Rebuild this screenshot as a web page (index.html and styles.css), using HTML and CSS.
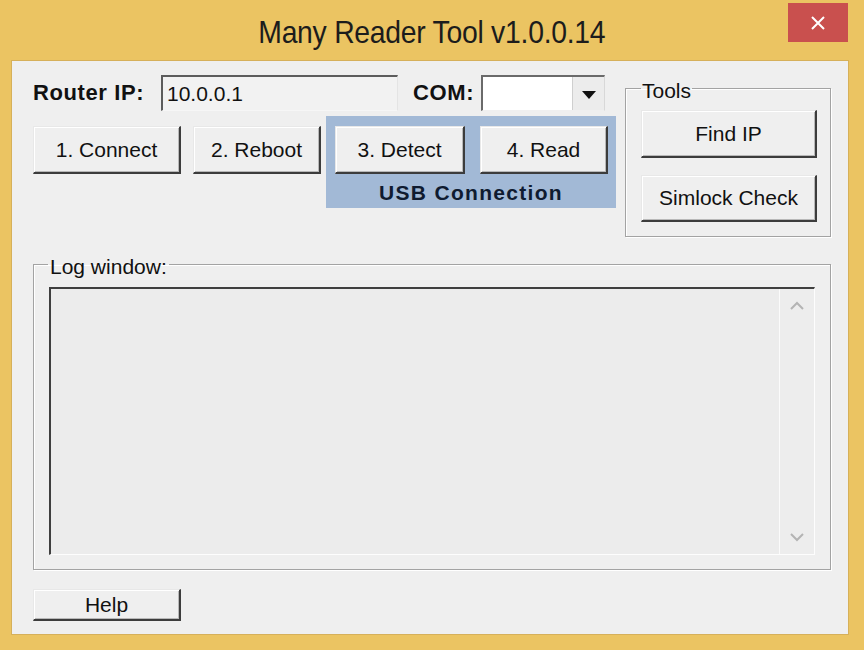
FILE: index.html
```html
<!DOCTYPE html>
<html>
<head>
<meta charset="utf-8">
<title>Many Reader Tool</title>
<link rel="stylesheet" href="styles.css">
</head>
<body>
<div class="window">
  <div class="titlebar">
    <div class="tb-spacer"></div>
    <div class="title">Many Reader Tool v1.0.0.14</div>
    <div class="tb-right">
      <div class="close">
        <svg width="14" height="14" viewBox="0 0 14 14"><path d="M1 1L13 13M13 1L1 13" stroke="#fff" stroke-width="2"/></svg>
      </div>
    </div>
  </div>
  <div class="client">
    <div class="top">
      <div class="left">
        <div class="row1">
          <span class="lbl lbl-ip">Router IP:</span>
          <div class="textbox">10.0.0.1</div>
          <span class="lbl lbl-com">COM:</span>
          <div class="combo">
            <div class="combo-field"></div>
            <div class="combo-btn">
              <svg width="14" height="8" viewBox="0 0 14 8"><path d="M0 0H14L7 8Z" fill="#111"/></svg>
            </div>
          </div>
        </div>
        <div class="row2">
          <button class="btn btn-connect">1. Connect</button>
          <button class="btn btn-reboot">2. Reboot</button>
          <div class="usb">
            <div class="usb-btns">
              <button class="btn btn-detect">3. Detect</button>
              <button class="btn btn-read">4. Read</button>
            </div>
            <div class="usb-label">USB Connection</div>
          </div>
        </div>
      </div>
      <fieldset class="group tools">
        <legend>Tools</legend>
        <button class="btn btn-tool">Find IP</button>
        <button class="btn btn-tool">Simlock Check</button>
      </fieldset>
    </div>
    <fieldset class="group log">
      <legend>Log window:</legend>
      <div class="logbox">
        <div class="logtext"></div>
        <div class="scroll">
          <svg width="14" height="9" viewBox="0 0 14 9"><path d="M1 8L7 2L13 8" fill="none" stroke="#b4b4b4" stroke-width="2"/></svg>
          <svg width="14" height="9" viewBox="0 0 14 9"><path d="M1 1L7 7L13 1" fill="none" stroke="#b4b4b4" stroke-width="2"/></svg>
        </div>
      </div>
    </fieldset>
    <button class="btn btn-help">Help</button>
  </div>
</div>
</body>
</html>
```
FILE: styles.css
```css
html, body {
  margin: 0;
  padding: 0;
  background: #ebc462;
}
.window {
  width: 864px;
  height: 650px;
  background: #ebc462;
  font-family: "Liberation Sans", Arial, sans-serif;
  overflow: hidden;
}
.titlebar {
  height: 61px;
  display: grid;
  grid-template-columns: 1fr auto 1fr;
  align-items: center;
}
.title {
  font-family: "Liberation Sans", Arial, sans-serif;
  font-size: 31.5px;
  color: #1c1c1c;
  padding-top: 3px;
  letter-spacing: -0.3px;
  transform: scaleX(0.9);
}
.tb-right {
  align-self: start;
  justify-self: end;
  padding: 3px 16px 0 0;
}
.close {
  width: 60px;
  height: 39px;
  background: #c9504e;
  display: flex;
  align-items: center;
  justify-content: center;
}
.client {
  margin-left: 12px;
  width: 836px;
  height: 573px;
  background: #efefef;
  box-sizing: border-box;
  padding: 14px 0 0 21px;
  box-shadow: 0 0 0 1px #d6b05a;
}
.top {
  display: flex;
  align-items: flex-start;
}
.left {
  width: 583px;
}
.row1 {
  display: flex;
  align-items: center;
  height: 36px;
}
.lbl {
  font-weight: bold;
  font-size: 22px;
  color: #111;
  letter-spacing: 0.6px;
}
.lbl-ip {
  width: 128px;
}
.textbox {
  width: 237px;
  height: 36px;
  box-sizing: border-box;
  border-style: solid;
  border-width: 2px 1px 1px 2px;
  border-color: #5c5c5c #e4e4e4 #f6f6f6 #5c5c5c;
  background: #f2f2f2;
  font-size: 21px;
  color: #111;
  padding: 5px 0 0 4px;
}
.lbl-com {
  margin-left: 15px;
  width: 68px;
}
.combo {
  width: 124px;
  height: 36px;
  box-sizing: border-box;
  display: flex;
  border-style: solid;
  border-width: 2px 1px 1px 2px;
  border-color: #6a6a6a #d8d8d8 #efefef #6a6a6a;
  background: #fff;
}
.combo-field {
  flex: 1;
}
.combo-btn {
  width: 31px;
  background: #ececec;
  border-left: 1px solid #cfcfcf;
  display: flex;
  align-items: center;
  justify-content: center;
  padding-top: 2px;
}
.row2 {
  display: flex;
  align-items: flex-start;
  margin-top: 5px;
}
.btn {
  font-family: "Liberation Sans", Arial, sans-serif;
  font-size: 21px;
  color: #111;
  background: #efefef;
  box-sizing: border-box;
  border-style: solid;
  border-width: 1px 2px 2px 1px;
  border-color: #e8e8e8 #3c3c3c #3c3c3c #e8e8e8;
  box-shadow: inset 1px 1px 0 #ffffff, inset -1px -1px 0 #b8b8b8;
  padding: 0;
  margin: 0;
  height: 48px;
}
.btn-connect {
  width: 148px;
  margin-top: 10px;
}
.btn-reboot {
  width: 128px;
  margin-top: 10px;
  margin-left: 12px;
}
.usb {
  margin-left: 5px;
  width: 290px;
  height: 92px;
  box-sizing: border-box;
  background: #a2b9d6;
  padding: 10px 0 0 9px;
}
.usb-btns {
  display: flex;
  gap: 15px;
}
.btn-detect {
  width: 130px;
}
.btn-read {
  width: 128px;
}
.usb-label {
  text-align: center;
  font-weight: bold;
  font-size: 21px;
  letter-spacing: 1.3px;
  color: #0f1b30;
  line-height: 38px;
  padding-right: 9px;
}
.group {
  margin: 0;
  min-width: 0;
  border: 1px solid #a3a3a3;
  box-shadow: 1px 1px 0 #ffffff, inset 1px 1px 0 #ffffff;
}
.group legend {
  font-size: 21px;
  line-height: 22px;
  color: #111;
  padding: 6px 1px 0;
}
.tools {
  margin-left: 9px;
  margin-top: -1px;
  width: 206px;
  box-sizing: border-box;
  padding: 8px 13px 14px 15px;
  display: flex;
  flex-direction: column;
  gap: 17px;
}
.btn-tool {
  width: 176px;
  height: 48px;
}
.btn-tool + .btn-tool {
  height: 47px;
}
.log {
  margin-top: 13px;
  width: 798px;
  box-sizing: border-box;
  padding: 9px 15px 14px 15px;
}
.log legend {
  padding: 6px 2px 0;
  margin-left: -1px;
}
.logbox {
  height: 268px;
  box-sizing: border-box;
  display: flex;
  border-style: solid;
  border-width: 2px 1px 1px 2px;
  border-color: #3f3f3f #fdfdfd #fdfdfd #3f3f3f;
  background: #ececec;
}
.logtext {
  flex: 1;
}
.scroll {
  width: 34px;
  border-left: 1px solid #fbfbfb;
  background: #ededed;
  display: flex;
  flex-direction: column;
  justify-content: space-between;
  align-items: center;
  padding: 12px 0 12px;
}
.btn-help {
  display: block;
  margin-top: 19px;
  width: 148px;
  height: 32px;
}
```
